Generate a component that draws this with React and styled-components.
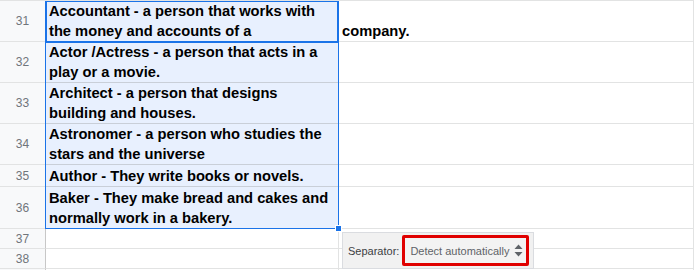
import React from "react";
import styled, { createGlobalStyle } from "styled-components";

const gridLine = "#e2e3e3";
const selectedLine = "#c9cfd8";
const headerLine = "#c7c7c7";
const headerBg = "#f8f9fa";
const selectBlue = "#1a73e8";
const selectFill = "#e8f0fe";

const GlobalStyle = createGlobalStyle`
    html, body {
        margin: 0;
        padding: 0;
        background: #fff;
        overflow: hidden;
    }
`;

const SheetStyled = styled.div`
    position: relative;
    width: 694px;
    height: 270px;
    overflow: hidden;
    border-top: 1px solid ${gridLine};
    box-sizing: border-box;
    font-family: Arial, "Liberation Sans", sans-serif;
`;

const RowStyled = styled.div`
    display: grid;
    grid-template-columns: 46px 293px 1fr;
    grid-template-rows: ${(p) => p.$height}px;
    height: ${(p) => p.$height}px;
`;

const RowHeader = styled.div`
    display: flex;
    align-items: center;
    justify-content: center;
    background: ${headerBg};
    border-right: 1px solid ${headerLine};
    border-bottom: 1px solid ${gridLine};
    box-sizing: border-box;
    color: #70757a;
    font-size: 12px;
`;

const Cell = styled.div`
    display: flex;
    align-items: flex-end;
    min-height: 0;
    padding: 0 4px 0 3px;
    background: ${(p) => (p.$selected ? selectFill : "#fff")};
    border-right: 1px solid ${gridLine};
    border-bottom: 1px solid ${(p) => (p.$selected ? selectedLine : gridLine)};
    box-sizing: border-box;
    color: #000;
    font-size: 14.7px;
    font-weight: 700;
    line-height: 20px;
    white-space: ${(p) => (p.$nowrap ? "nowrap" : "normal")};
`;

const RangeBorder = styled.div`
    position: absolute;
    left: 45px;
    top: -1px;
    width: 294px;
    height: 229px;
    border: 1px solid ${selectBlue};
    box-sizing: border-box;
    pointer-events: none;
`;

const ActiveCell = styled.div`
    position: absolute;
    left: 45px;
    top: -1px;
    width: 294px;
    height: 43px;
    border: 2px solid ${selectBlue};
    box-sizing: border-box;
    pointer-events: none;
`;

const FillHandle = styled.div`
    position: absolute;
    left: 335px;
    top: 224px;
    width: 7px;
    height: 7px;
    background: ${selectBlue};
    border: 1px solid #fff;
    box-sizing: border-box;
`;

const SeparatorPopup = styled.div`
    position: absolute;
    left: 342px;
    top: 231px;
    width: 192px;
    height: 37px;
    display: flex;
    align-items: center;
    gap: 3px;
    padding-left: 5px;
    background: #f1f1f1;
    border: 1px solid #dadce0;
    box-sizing: border-box;
    font-size: 11px;
`;

const SeparatorLabel = styled.span`
    color: #3c4043;
`;

const SelectBox = styled.div`
    display: flex;
    align-items: center;
    justify-content: space-between;
    width: 127px;
    height: 31px;
    padding: 0 3px 0 5px;
    border: 3px solid #e00000;
    border-radius: 2px;
    background: #f3f3f3;
    box-sizing: border-box;
    color: #5f6368;
    white-space: nowrap;
`;

const rows = [
    { n: 31, h: 41, a: "Accountant - a person that works with the money and accounts of a", b: "company." },
    { n: 32, h: 41, a: "Actor /Actress - a person that acts in a play or a movie." },
    { n: 33, h: 41, a: "Architect - a person that designs building and houses." },
    { n: 34, h: 41, a: "Astronomer - a person who studies the stars and the universe" },
    { n: 35, h: 22, a: "Author - They write books or novels." },
    { n: 36, h: 42, a: "Baker - They make bread and cakes and normally work in a bakery." },
    { n: 37, h: 20 },
    { n: 38, h: 20 },
    { n: "", h: 20 },
];

const SortArrows = () => (
    <svg width="9" height="13" viewBox="0 0 9 13">
        <path d="M4.5 0.5 L8.5 5 L0.5 5 Z" fill="#5f6368" />
        <path d="M4.5 12.5 L8.5 8 L0.5 8 Z" fill="#5f6368" />
    </svg>
);

const App = () => {
    return (
        <>
            <GlobalStyle />
            <SheetStyled>
                {rows.map((r, i) => (
                    <RowStyled key={i} $height={r.h}>
                        <RowHeader>{r.n}</RowHeader>
                        <Cell $selected={i < 6}>{r.a}</Cell>
                        <Cell $nowrap>{r.b}</Cell>
                    </RowStyled>
                ))}
                <RangeBorder />
                <ActiveCell />
                <FillHandle />
                <SeparatorPopup>
                    <SeparatorLabel>Separator:</SeparatorLabel>
                    <SelectBox>
                        <span>Detect automatically</span>
                        <SortArrows />
                    </SelectBox>
                </SeparatorPopup>
            </SheetStyled>
        </>
    );
};

export default App;
